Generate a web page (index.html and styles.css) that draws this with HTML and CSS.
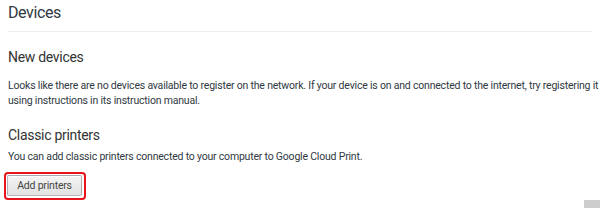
FILE: index.html
```html
<!DOCTYPE html>
<html>
<head>
<meta charset="utf-8">
<link rel="stylesheet" href="styles.css">
</head>
<body>
<div class="page">
  <header class="page-header">
    <h1 class="title">Devices</h1>
  </header>
  <section class="section">
    <h2 class="section-title first">New devices</h2>
    <p class="text">Looks like there are no devices available to register on the network. If your device is on and connected to the internet, try registering it<br>using instructions in its instruction manual.</p>
  </section>
  <section class="section">
    <h2 class="section-title second">Classic printers</h2>
    <p class="text">You can add classic printers connected to your computer to Google Cloud Print.</p>
    <span class="highlight"><button class="btn">Add printers</button></span>
  </section>
</div>
<div class="corner"></div>
</body>
</html>
```
FILE: styles.css
```css
html, body {
  margin: 0;
  padding: 0;
  background: #fff;
}
body {
  font-family: Roboto, "Noto Sans", sans-serif;
  color: #303942;
  width: 600px;
  height: 208px;
  overflow: hidden;
  position: relative;
}
.page {
  padding-left: 8px;
  width: 584px;
}
.page-header {
  border-bottom: 1px solid #eeeeee;
  padding-top: 3px;
  height: 28px;
}
.title {
  margin: 0;
  font-size: 16px;
  line-height: 20px;
  letter-spacing: -0.4px;
  font-weight: normal;
  color: #303942;
}
.section-title {
  margin: 0;
  font-size: 14px;
  line-height: 18px;
  letter-spacing: -0.3px;
  font-weight: normal;
  color: #333;
}
.section-title.first { margin-top: 16px; }
.section-title.second { margin-top: 18px; }
.text {
  margin: 0;
  font-size: 10.5px;
  line-height: 15px;
  letter-spacing: -0.2px;
  color: #303942;
  white-space: nowrap;
}
.section-title.first + .text { margin-top: 12px; }
.section-title.second + .text { margin-top: 5px; }
.highlight {
  display: inline-block;
  margin-top: 8px;
  margin-left: -4px;
  border: 2px solid #e8141b;
  border-radius: 4px;
  padding: 1px 2px 2px 1px;
}
.btn {
  display: block;
  height: 21px;
  width: 75px;
  padding: 0;
  margin: 0;
  font-family: inherit;
  font-size: 10.5px;
  letter-spacing: -0.2px;
  color: #444;
  border: 1px solid rgba(0,0,0,0.25);
  border-radius: 2px;
  background: linear-gradient(#f4f4f4, #e2e2e2);
  box-shadow: inset 0 1px 0 rgba(255,255,255,0.8);
}
.corner {
  position: absolute;
  right: 0;
  bottom: 0;
  width: 16px;
  height: 8px;
  background: #cdcdcd;
}
```
